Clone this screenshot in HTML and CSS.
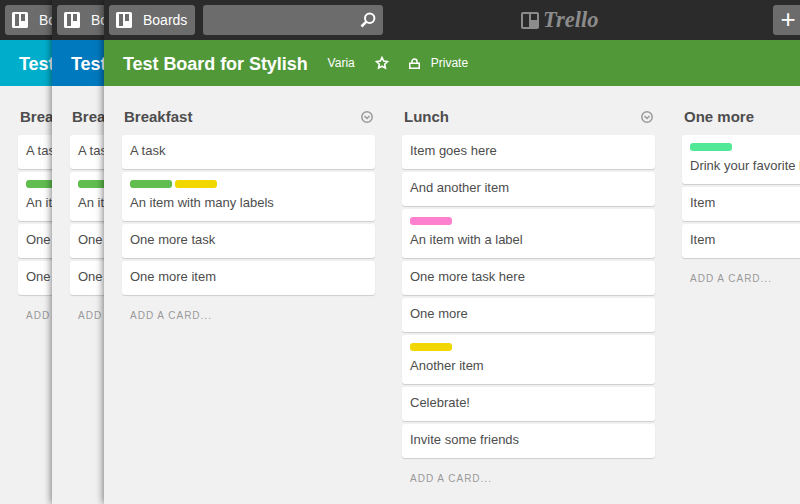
FILE: index.html
```html
<!DOCTYPE html>
<html lang="en">
<head>
  <meta charset="UTF-8" />
  <meta name="viewport" content="width=device-width, initial-scale=1.0"/>
  <title>Test Board for Stylish</title>
  <link rel="stylesheet" href="styles.css">
</head>
<body>

  <svg class="icon-defs" width="0" height="0">
    <symbol id="board-icon" viewBox="0 0 16 16">
      <path fill="#fff" d="M1.500 0h13A1.500 1.500 0 0 1 16 1.500v13a1.500 1.500 0 0 1-1.500 1.500h-13A1.500 1.500 0 0 1 0 14.500v-13A1.500 1.500 0 0 1 1.500 0z"/>
      <rect x="3" y="2" width="4" height="12" fill="#6c6c6c"/>
      <rect x="9" y="2" width="4" height="7" fill="#6c6c6c"/>
    </symbol>
    <symbol id="toggle-icon" viewBox="0 0 12 12">
      <circle cx="6" cy="6" r="5.200" fill="none" stroke="#999" stroke-width="1.500"/>
      <path d="M3.500 5l2.500 2.500L8.500 5" fill="none" stroke="#999" stroke-width="1.500"/>
    </symbol>
  </svg>

  <div class="desktop">

    <section class="window window-one">
      <header class="top-bar">
        <a class="nav-btn"><svg class="board-icon"><use href="#board-icon"/></svg>Boards</a>
      </header>
      <div class="board-bar cyan">
        <h1>Test Board for Stylish</h1>
      </div>
      <div class="lists">
        <div class="list">
          <div class="list-title"><h3>Breakfast</h3></div>
          <div class="card">A task</div>
          <div class="card"><div class="labels"><span class="label green"></span><span class="label yellow"></span></div>An item with many labels</div>
          <div class="card">One more task</div>
          <div class="card">One more item</div>
          <a class="add-card">Add a card...</a>
        </div>
      </div>
    </section>

    <section class="window window-two">
      <header class="top-bar">
        <a class="nav-btn"><svg class="board-icon"><use href="#board-icon"/></svg>Boards</a>
      </header>
      <div class="board-bar blue">
        <h1>Test Board for Stylish</h1>
      </div>
      <div class="lists">
        <div class="list">
          <div class="list-title"><h3>Breakfast</h3></div>
          <div class="card">A task</div>
          <div class="card"><div class="labels"><span class="label green"></span><span class="label yellow"></span></div>An item with many labels</div>
          <div class="card">One more task</div>
          <div class="card">One more item</div>
          <a class="add-card">Add a card...</a>
        </div>
      </div>
    </section>

    <section class="window window-three">
      <header class="top-bar">
        <a class="nav-btn"><svg class="board-icon"><use href="#board-icon"/></svg>Boards</a>
        <div class="search">
          <svg class="search-icon" viewBox="0 0 16 16"><circle cx="9.700" cy="6.300" r="4.700" fill="none" stroke="#fff" stroke-width="2"/><path d="M6.300 9.700L1.500 14.500" stroke="#fff" stroke-width="2.600"/></svg>
        </div>
        <div class="logo">
          <svg class="logo-icon" viewBox="0 0 18 17"><rect width="18" height="17" rx="2" fill="#8c8c8c"/><rect x="2" y="2" width="6" height="13" fill="#2b2b2b"/><rect x="10" y="2" width="6" height="6" fill="#2b2b2b"/></svg>
          <span class="logo-text">Trello</span>
        </div>
        <a class="add-btn">+</a>
      </header>
      <div class="board-bar green-bar">
        <h1>Test Board for Stylish</h1>
        <span class="board-meta">Varia</span>
        <svg class="star-icon" viewBox="0 0 14 14"><path d="M7 1.500l1.700 3.600 3.800.5-2.800 2.600.7 3.900L7 10.200l-3.400 1.900.7-3.900L1.500 5.600l3.800-.5z" fill="none" stroke="#fff" stroke-width="1.600"/></svg>
        <svg class="lock-icon" viewBox="0 0 11 11"><path d="M3 5V3.500a2.500 2.500 0 0 1 5 0V5" fill="none" stroke="#fff" stroke-width="1.500"/><rect x="0.750" y="5.250" width="9.500" height="5" fill="none" stroke="#fff" stroke-width="1.500"/></svg>
        <span class="board-meta">Private</span>
      </div>
      <div class="lists">
        <div class="list">
          <div class="list-title"><h3>Breakfast</h3><svg class="toggle"><use href="#toggle-icon"/></svg></div>
          <div class="card">A task</div>
          <div class="card"><div class="labels"><span class="label green"></span><span class="label yellow"></span></div>An item with many labels</div>
          <div class="card">One more task</div>
          <div class="card">One more item</div>
          <a class="add-card">Add a card...</a>
        </div>
        <div class="list">
          <div class="list-title"><h3>Lunch</h3><svg class="toggle"><use href="#toggle-icon"/></svg></div>
          <div class="card">Item goes here</div>
          <div class="card">And another item</div>
          <div class="card"><div class="labels"><span class="label pink"></span></div>An item with a label</div>
          <div class="card">One more task here</div>
          <div class="card">One more</div>
          <div class="card"><div class="labels"><span class="label yellow"></span></div>Another item</div>
          <div class="card">Celebrate!</div>
          <div class="card">Invite some friends</div>
          <a class="add-card">Add a card...</a>
        </div>
        <div class="list">
          <div class="list-title"><h3>One more</h3></div>
          <div class="card"><div class="labels"><span class="label mint"></span></div>Drink your favorite beverage</div>
          <div class="card">Item</div>
          <div class="card">Item</div>
          <a class="add-card">Add a card...</a>
        </div>
      </div>
    </section>

  </div>

</body>
</html>
```

FILE: styles.css
```css
body {
  font-family: "Liberation Sans", Arial, sans-serif;
  background: #f1f1f1;
  margin: 0;
  color: #4d4d4d;
}

.icon-defs {
  position: absolute;
}

.desktop {
  position: relative;
  width: 800px;
  height: 504px;
  overflow: hidden;
}

.window {
  position: absolute;
  top: 0;
  width: 800px;
  height: 504px;
  background: #f1f1f1;
  box-shadow: 0 0 8px rgba(0,0,0,0.6);
  overflow: hidden;
}

.window-one {
  left: 0;
}

.window-two {
  left: 52px;
}

.window-three {
  left: 104px;
  width: 696px;
}

.top-bar {
  height: 40px;
  background: #2b2b2b;
  display: flex;
  align-items: center;
  padding-left: 5px;
  box-sizing: border-box;
}

.nav-btn {
  width: 86px;
  height: 30px;
  flex: none;
  box-sizing: border-box;
  background: #6c6c6c;
  border-radius: 3px;
  color: #fff;
  font-size: 14px;
  display: flex;
  align-items: center;
  padding-left: 7px;
}

.board-icon {
  width: 16px;
  height: 16px;
  margin-right: 11px;
}

.search {
  width: 180px;
  height: 30px;
  flex: none;
  margin-left: 8px;
  background: #6c6c6c;
  border-radius: 3px;
  display: flex;
  align-items: center;
  justify-content: flex-end;
  padding-right: 6px;
  box-sizing: border-box;
}

.search-icon {
  width: 16px;
  height: 16px;
  margin-right: 1px;
}

.logo {
  display: flex;
  align-items: center;
  margin-left: 138px;
  width: 252px;
  flex: none;
}

.logo-icon {
  width: 18px;
  height: 17px;
}

.logo-text {
  font-family: "Liberation Serif", serif;
  font-style: italic;
  font-weight: bold;
  font-size: 22.5px;
  color: #8c8c8c;
  margin-left: 4px;
}

.add-btn {
  width: 30px;
  height: 30px;
  flex: none;
  background: #6c6c6c;
  border-radius: 3px 0 0 3px;
  color: #fff;
  font-size: 26px;
  line-height: 28px;
  text-align: center;
}

.board-bar {
  height: 46px;
  display: flex;
  align-items: center;
  padding-left: 19px;
  color: #fff;
}

.board-bar h1 {
  margin: 2px 0 0;
  font-size: 18px;
  letter-spacing: -0.05px;
  white-space: nowrap;
}

.cyan {
  background: #00aecc;
}

.blue {
  background: #0079bf;
}

.green-bar {
  background: #519839;
}

.board-meta {
  font-size: 12px;
}

.board-bar h1 + .board-meta {
  margin-left: 20px;
}

.star-icon {
  width: 14px;
  height: 14px;
  margin-left: 20px;
}

.lock-icon {
  width: 11px;
  height: 11px;
  margin: 1px 11px 0 20px;
}

.lists {
  display: flex;
  gap: 27px;
  padding-left: 18px;
}

.list {
  width: 253px;
  flex: none;
}

.list-title {
  height: 49px;
  box-sizing: border-box;
  display: flex;
  align-items: center;
  justify-content: space-between;
  padding: 12px 2px 0;
}

.list-title h3 {
  margin: 0;
  font-size: 15px;
  color: #4d4d4d;
}

.toggle {
  width: 12px;
  height: 12px;
}

.card {
  background: #fff;
  border-radius: 3px;
  box-shadow: 0 1px 1px rgba(0,0,0,0.15);
  padding: 7px 8px 9px;
  margin-bottom: 3px;
  font-size: 13px;
  line-height: 18px;
  white-space: nowrap;
  overflow: hidden;
}

.labels {
  display: flex;
  gap: 3px;
  margin: 1px 0 6px;
}

.label {
  width: 42px;
  height: 8px;
  border-radius: 3px;
}

.label.green {
  background: #61bd4f;
}

.label.yellow {
  background: #f2d600;
}

.label.pink {
  background: #ff80ce;
}

.label.mint {
  background: #51e898;
}

.add-card {
  display: block;
  margin-top: 12px;
  padding-left: 8px;
  font-size: 10px;
  line-height: 18px;
  letter-spacing: 1px;
  text-transform: uppercase;
  color: #999;
}
```
